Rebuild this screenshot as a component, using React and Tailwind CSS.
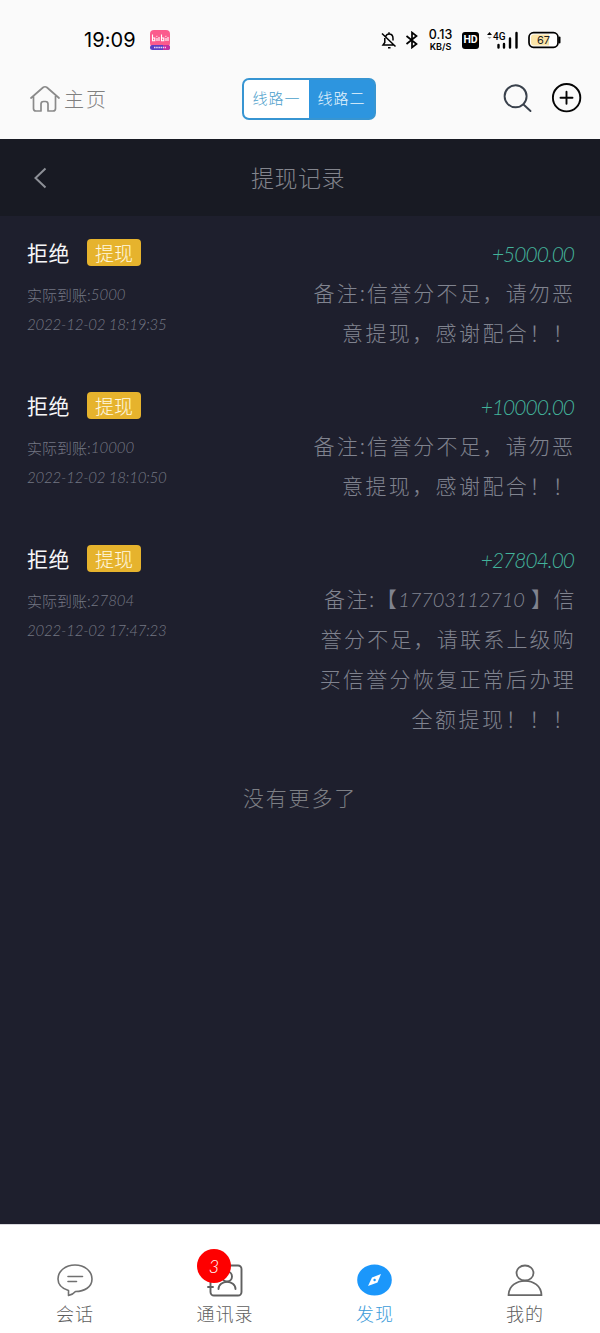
import React from "react";

const apology = [
  { text: "备注:信誉分不足，请勿恶", cls: "tracking-[2.100px] pr-[1px]" },
  { text: "意提现，感谢配合！！", cls: "tracking-[2.400px]" },
];

const records = [
  {
    amount: "+5000.00",
    actual: "5000",
    time: "2022-12-02 18:19:35",
    height: "h-[153px]",
    lines: apology,
  },
  {
    amount: "+10000.00",
    actual: "10000",
    time: "2022-12-02 18:10:50",
    height: "h-[153px]",
    lines: apology,
  },
  {
    amount: "+27804.00",
    actual: "27804",
    time: "2022-12-02 17:47:23",
    height: "h-[234px]",
    lines: [
      { text: "备注:【", digits: "17703112710", after: " 】信", cls: "tracking-[1.500px]" },
      { text: "誉分不足，请联系上级购", cls: "tracking-[2.2px]" },
      { text: "买信誉分恢复正常后办理", cls: "tracking-[2.3px]" },
      { text: "全额提现！！！", cls: "tracking-[2.5px]" },
    ],
  },
];

function StatusBar() {
  return (
    <div className="flex h-[79px] items-center pt-px text-black">
      <span className="ml-[84px] w-[52px] font-['Inter',sans-serif] text-[20px] leading-none font-normal tracking-[0.100px]">19:09</span>
      <svg className="ml-[14px]" width="20" height="20" viewBox="0 0 20 20">
        <rect width="20" height="17" rx="4" fill="#fb5b8d" />
        <rect y="15" width="20" height="5" rx="2.5" fill="#5b3fc4" />
        <path d="M13 15h4.500a2.500 2.500 0 0 1 0 5H13z" fill="#c52fa0" />
        <path d="M2.500 4.500v6.200h2.300V8H2.500M7 8v3M9 7v4M11.500 4.500v6.200h2.300V8h-2.300M16 8v3M18 7v4M6.600 6l.6.6M15.600 6l.6.6" fill="none" stroke="#fff" strokeWidth="1.100" />
        <path d="M4 17.500h12" stroke="#e9d6f7" strokeWidth="1.500" strokeDasharray="1.500 .7" />
      </svg>
      <svg className="ml-[211px]" width="16" height="18" viewBox="0 0 16 18" fill="none" stroke="#000" strokeWidth="1.500">
        <path d="M4.700 5.500Q5.600 3 8 3q4 0 4 4.500v2M3.800 7v4.500L2 14h10.500M7 16.800h2.500M8 1.200V3M1 2.500l13.500 13" />
      </svg>
      <svg className="ml-[8px]" width="14" height="18" viewBox="0 0 14 18" fill="none" stroke="#000" strokeWidth="1.700">
        <path d="M1.500 5l10 8L7 16.500v-15L11.500 5l-10 8" />
      </svg>
      <div className="ml-[8px] flex w-[27px] flex-col items-center font-['Inter',sans-serif] font-medium leading-none">
        <span className="text-[12.500px] leading-[12px]">0.13</span>
        <span className="text-[9px] leading-[11px] font-semibold">KB/S</span>
      </div>
      <span className="ml-[8px] flex h-[17px] w-[17px] items-center justify-center rounded-[3px] bg-black font-['Roboto',sans-serif] text-[10.500px] leading-none font-bold text-white">HD</span>
      <svg className="ml-[8px]" width="32" height="18" viewBox="0 0 32 18">
        <path d="M0 4l2.500-3L5 4z" />
        <path d="M.5 6h4L2.500 8z" fill="#aaa" />
        <text x="6" y="8.800" fontSize="10" fontWeight="500" fontFamily="Roboto, sans-serif">4G</text>
        <path d="M11.500 14v2.500M17 13v3.500M23 7.500v9M29.500 2v14.500" stroke="#000" strokeWidth="2.400" strokeLinecap="round" />
      </svg>
      <svg className="ml-[9px]" width="33" height="18" viewBox="0 0 33 18">
        <rect x="1" y="1.700" width="29" height="14.600" rx="4.500" fill="#fff" stroke="#000" strokeWidth="1.700" />
        <path d="M6 3.500h15v11H6a3 3 0 0 1-3-3v-5a3 3 0 0 1 3-3z" fill="#fbe5a8" />
        <path d="M31.500 6.500v5" stroke="#000" strokeWidth="2" strokeLinecap="round" />
        <text x="15.500" y="13" textAnchor="middle" fontSize="11" fontWeight="400" fontFamily="Inter, sans-serif" fill="#222">67</text>
      </svg>
    </div>
  );
}

function TopBar() {
  return (
    <div className="flex h-[60px] items-start">
      <div className="flex h-[40px] w-[242px] items-center pl-[30px] text-[#808080]">
        <svg width="30" height="28" viewBox="0 0 30 28" fill="none" stroke="#8a8a8a" strokeWidth="1.700" strokeLinejoin="round" strokeLinecap="round">
          <path d="M1 13L13 2.500q2-1.500 4 0L29 13M3.500 11v12.500q0 2.500 2.500 2.500h5v-7q0-2.500 2.500-2.500h2q2.500 0 2.500 2.500v7h5q2.500 0 2.500-2.500V11" />
        </svg>
        <span className="ml-[4px] text-[20px] tracking-[2px]">主页</span>
      </div>
      <div className="-mt-px flex h-[42px] w-[134px] rounded-[7px] border-2 border-[#3795d2] bg-[#2d95df] text-[15px] tracking-[1px]">
        <div className="flex w-[65px] items-center justify-center rounded-l-[5px] bg-white pb-[2px] text-[#4b9ecb]">线路一</div>
        <div className="flex flex-1 items-center justify-center pb-[2px] text-[#e9f5fd]">线路二</div>
      </div>
      <svg className="ml-[127px] mt-[5px]" width="30" height="30" viewBox="0 0 30 30" fill="none" stroke="#39414c" strokeWidth="1.900" strokeLinecap="round">
        <circle cx="12.600" cy="12.300" r="11" />
        <path d="M20.500 20.500l7 6.500" />
      </svg>
      <svg className="ml-[18px] mt-[4px]" width="31" height="31" viewBox="0 0 31 31" fill="none" stroke="#050505" strokeWidth="1.900" strokeLinecap="round">
        <circle cx="15.600" cy="14.700" r="13.700" />
        <path d="M9.500 14.700h12M15.500 8.700v12" />
      </svg>
    </div>
  );
}

function Record({ item }) {
  return (
    <div className={"flex justify-between pl-[27px] pr-[24px] " + item.height}>
      <div className="flex flex-col">
        <div className="flex h-[27px] items-center">
          <span className="w-[60px] text-[21px] leading-none font-normal tracking-[0.500px] text-[#f6f6f8]">拒绝</span>
          <span className="flex h-[27px] w-[54px] items-center justify-center rounded-[4px] bg-[#e6b32d] text-[19px] leading-none text-[#fff8e0]">提现</span>
        </div>
        <div className="mt-[13px] flex h-[30px] items-center text-[15px] leading-none text-[#747783]">
          <span>实际到账:</span>
          <span className="font-['Lato',sans-serif] italic">{item.actual}</span>
        </div>
        <div className="flex h-[30px] items-center font-['Lato',sans-serif] text-[15px] leading-none italic tracking-[-0.200px] text-[#747783]">{item.time}</div>
      </div>
      <div className="flex flex-col items-end text-[#80838f]">
        <div className="flex h-[33px] items-start pr-[2px] pt-[3px] font-['Lato',sans-serif] text-[21px] leading-[24px] italic tracking-[-1px] text-[#43b39b]">{item.amount}</div>
        {item.lines.map((l, i) => (
          <div key={i} className={"h-[40px] whitespace-pre text-[21px] leading-[40px] " + l.cls}>
            {l.text}
            {l.digits && <span className="font-['Lato',sans-serif] text-[20px] italic tracking-[-0.100px]">{l.digits}</span>}
            {l.after}
          </div>
        ))}
      </div>
    </div>
  );
}

function Tab({ label, active, children, badge }) {
  return (
    <div className="flex w-[150px] flex-col items-center pt-[37px]">
      <div className="relative h-[36px] w-[36px]">
        {children}
        {badge && (
          <span className="absolute -left-[10px] -top-[13px] flex h-[34px] w-[34px] items-center justify-center rounded-full bg-[#fe0000] font-['Lato',sans-serif] text-[18px] font-light italic text-white">{badge}</span>
        )}
      </div>
      <span className={"mt-[4px] text-[18px] leading-[22px] tracking-[1px] " + (active ? "text-[#3c9bd9]" : "text-[#5e5e5e]")}>{label}</span>
    </div>
  );
}

export default function App() {
  return (
    <div className="flex h-[1333px] w-[600px] flex-col overflow-hidden bg-[#1e1f2d] font-['Noto_Sans_CJK_SC',sans-serif] font-light">
      <header className="h-[139px] bg-[#fafafa]">
        <StatusBar />
        <TopBar />
      </header>
      <div className="flex h-[77px] items-center bg-[#181a23]">
        <svg className="ml-[33px]" width="15" height="22" viewBox="0 0 15 22" fill="none" stroke="#8d9097" strokeWidth="2">
          <path d="M12.500 1.500L2.500 11l10 9.500" />
        </svg>
        <h1 className="ml-[203px] text-[23px] leading-none tracking-[0.500px] text-[#83858d]">提现记录</h1>
      </div>
      <main className="flex-1 pt-[23px]">
        {records.map((r) => (
          <Record key={r.time} item={r} />
        ))}
        <div className="-mt-[2px] text-center text-[21px] leading-[40px] tracking-[1.800px] text-[#7c7e84]">没有更多了</div>
      </main>
      <nav className="flex h-[109px] border-t border-[#d9d9de] bg-white">
        <Tab label="会话">
          <svg width="36" height="36" viewBox="0 0 36 36" fill="none" stroke="#707070" strokeWidth="1.600" strokeLinecap="round" strokeLinejoin="round">
            <path d="M11.500 33.500V28.500C5 26.500 1 22 1 17 1 9 8.500 3 18 3s17 6 17 14-7.500 12.500-16.500 12.500Q16 32.500 11.500 33.500z" />
            <path d="M11 14.500h14.500M11 19.500h8.500" />
          </svg>
        </Tab>
        <Tab label="通讯录" badge="3">
          <svg width="36" height="36" viewBox="0 0 36 36" fill="none" stroke="#606060" strokeWidth="1.900" strokeLinecap="round">
            <rect x="3.500" y="3.500" width="31" height="30" rx="3.500" />
            <path d="M1 11h5M1 25h5" />
            <circle cx="20" cy="14.500" r="5" />
            <path d="M11.500 27c0-9.500 17-9.500 17 0" />
          </svg>
        </Tab>
        <Tab label="发现" active>
          <svg width="36" height="36" viewBox="0 0 36 36">
            <ellipse cx="17.500" cy="18" rx="17.300" ry="15.600" fill="#1b97fb" />
            <path d="M24 12l-3.500 8.500L11 24l4-8.500z" fill="#fff" />
            <circle cx="17.600" cy="18" r="1.200" fill="#1b97fb" />
          </svg>
        </Tab>
        <Tab label="我的">
          <svg width="36" height="36" viewBox="0 0 36 36" fill="none" stroke="#686868" strokeWidth="1.800" strokeLinejoin="round">
            <ellipse cx="18" cy="11" rx="8.500" ry="7.500" />
            <path d="M1.500 33.200C2 14 34 14 34.500 33.200z" />
          </svg>
        </Tab>
      </nav>
    </div>
  );
}
